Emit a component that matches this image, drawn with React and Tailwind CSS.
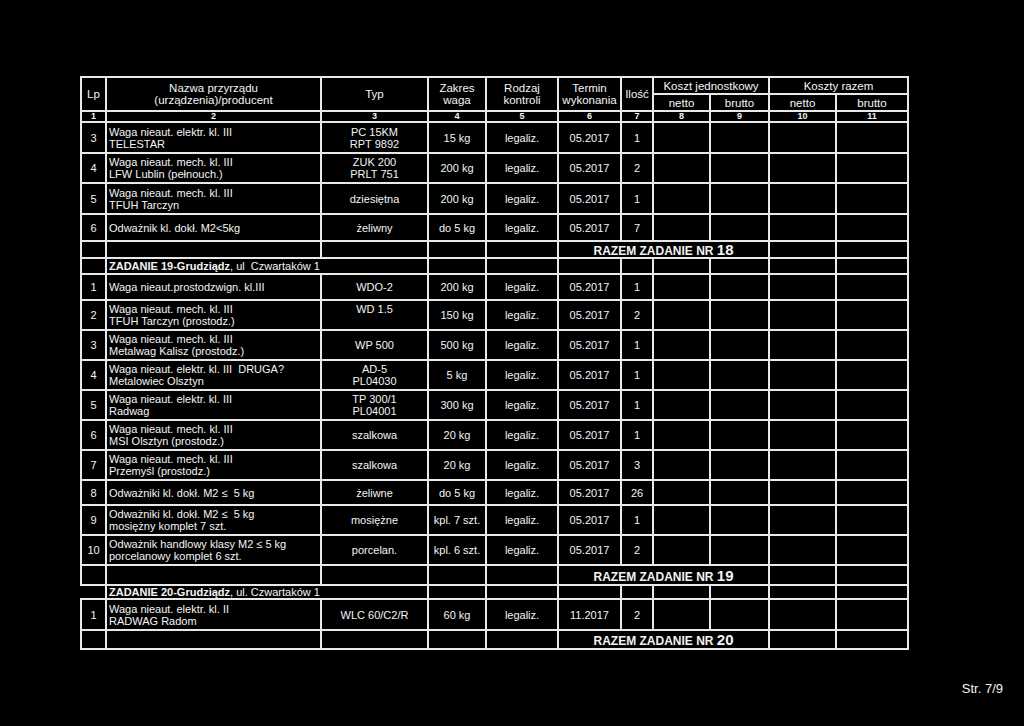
import React from 'react'

const td = 'border-2 border-[#e8e8e8] px-[2px] text-center align-middle'
const tdL = 'border-2 border-[#e8e8e8] pl-[2px] text-left align-middle'

const rows = [
  { lp: '3', name: ['Waga nieaut. elektr. kl. III', 'TELESTAR'], typ: ['PC 15KM', 'RPT 9892'], zakres: '15 kg', termin: '05.2017', il: '1', h: 'h-[31px]' },
  { lp: '4', name: ['Waga nieaut. mech. kl. III', 'LFW Lublin (pełnouch.)'], typ: ['ZUK 200', 'PRLT 751'], zakres: '200 kg', termin: '05.2017', il: '2', h: 'h-[30px]' },
  { lp: '5', name: ['Waga nieaut. mech. kl. III', 'TFUH Tarczyn'], typ: ['dziesiętna'], zakres: '200 kg', termin: '05.2017', il: '1', h: 'h-[31px]' },
  { lp: '6', name: ['Odważnik kl. dokł. M2<5kg'], typ: ['żeliwny'], zakres: 'do 5 kg', termin: '05.2017', il: '7', h: 'h-[27px]' },
  { razem: '18', h: 'h-[16px]' },
  { zadanie: '19', rest: ', ul  Czwartaków 1', h: 'h-[16px]', lpBorder: true },
  { lp: '1', name: ['Waga nieaut.prostodzwign. kl.III'], typ: ['WDO-2'], zakres: '200 kg', termin: '05.2017', il: '1', h: 'h-[26px]' },
  { lp: '2', name: ['Waga nieaut. mech. kl. III', 'TFUH Tarczyn (prostodz.)'], typ: ['WD 1.5', '\u00a0'], zakres: '150 kg', termin: '05.2017', il: '2', h: 'h-[30px]' },
  { lp: '3', name: ['Waga nieaut. mech. kl. III', 'Metalwag Kalisz (prostodz.)'], typ: ['WP 500'], zakres: '500 kg', termin: '05.2017', il: '1', h: 'h-[30px]' },
  { lp: '4', name: ['Waga nieaut. elektr. kl. III  DRUGA?', 'Metalowiec Olsztyn'], typ: ['AD-5', 'PL04030'], zakres: '5 kg', termin: '05.2017', il: '1', h: 'h-[30px]' },
  { lp: '5', name: ['Waga nieaut. elektr. kl. III', 'Radwag'], typ: ['TP 300/1', 'PL04001'], zakres: '300 kg', termin: '05.2017', il: '1', h: 'h-[30px]' },
  { lp: '6', name: ['Waga nieaut. mech. kl. III', 'MSI Olsztyn (prostodz.)'], typ: ['szalkowa'], zakres: '20 kg', termin: '05.2017', il: '1', h: 'h-[30px]' },
  { lp: '7', name: ['Waga nieaut. mech. kl. III', 'Przemyśl (prostodz.)'], typ: ['szalkowa'], zakres: '20 kg', termin: '05.2017', il: '3', h: 'h-[30px]' },
  { lp: '8', name: ['Odważniki kl. dokł. M2 ≤  5 kg'], typ: ['żeliwne'], zakres: 'do 5 kg', termin: '05.2017', il: '26', h: 'h-[25px]' },
  { lp: '9', name: ['Odważniki kl. dokł. M2 ≤  5 kg', 'mosiężny komplet 7 szt.'], typ: ['mosiężne'], zakres: 'kpl. 7 szt.', termin: '05.2017', il: '1', h: 'h-[30px]' },
  { lp: '10', name: ['Odważnik handlowy klasy M2 ≤ 5 kg', 'porcelanowy komplet 6 szt.'], typ: ['porcelan.'], zakres: 'kpl. 6 szt.', termin: '05.2017', il: '2', h: 'h-[30px]' },
  { razem: '19', h: 'h-[20px]' },
  { zadanie: '20', rest: ', ul. Czwartaków 1', h: 'h-[14px]', lpBorder: false },
  { lp: '1', name: ['Waga nieaut. elektr. kl. II', 'RADWAG Radom'], typ: ['WLC 60/C2/R'], zakres: '60 kg', termin: '11.2017', il: '2', h: 'h-[31px]' },
  { razem: '20', h: 'h-[19px]' },
]

const Empty = ({ n }) => Array.from({ length: n }).map((_, i) => <td key={i} className={td}></td>)

const Row = ({ r }) => {
  if (r.razem) {
    return (
      <tr className={r.h}>
        <Empty n={5} />
        <td colSpan={4} className={td + ' font-bold text-[12px] leading-none'}>
          RAZEM ZADANIE NR <span className="text-[15px]">{r.razem}</span>
        </td>
        <Empty n={2} />
      </tr>
    )
  }
  if (r.zadanie) {
    return (
      <tr className={r.h}>
        <td className={r.lpBorder ? td : 'border-y-2 border-[#e8e8e8]'}></td>
        <td colSpan={2} className={tdL + ' leading-none whitespace-pre'}>
          <span className="font-bold">ZADANIE {r.zadanie}-Grudziądz</span>{r.rest}
        </td>
        <Empty n={8} />
      </tr>
    )
  }
  return (
    <tr className={r.h}>
      <td className={td}>{r.lp}</td>
      <td className={tdL}>
        {r.name.map((l, i) => <div key={i} className="whitespace-pre">{l}</div>)}
      </td>
      <td className={td}>
        {r.typ.map((l, i) => <div key={i}>{l}</div>)}
      </td>
      <td className={td}>{r.zakres}</td>
      <td className={td}>legaliz.</td>
      <td className={td}>{r.termin}</td>
      <td className={td}>{r.il}</td>
      <Empty n={4} />
    </tr>
  )
}

export default function App() {
  return (
    <div className="w-[1024px] h-[726px] bg-black text-[#f4f4f4] font-['Liberation_Sans',Arial,sans-serif] flex flex-col">
      <div className="pt-[76px] pl-[80px]">
        <table className="table-fixed w-[827px] border-collapse text-[11px] leading-[12px]">
          <colgroup>
            <col className="w-[25px]" />
            <col className="w-[215px]" />
            <col className="w-[107px]" />
            <col className="w-[58px]" />
            <col className="w-[72px]" />
            <col className="w-[63px]" />
            <col className="w-[32px]" />
            <col className="w-[57px]" />
            <col className="w-[59px]" />
            <col className="w-[67px]" />
            <col className="w-[72px]" />
          </colgroup>
          <thead className="text-[11.5px]">
            <tr className="h-[17px]">
              <td rowSpan={2} className={td}>Lp</td>
              <td rowSpan={2} className={td}>Nazwa przyrządu<br />(urządzenia)/producent</td>
              <td rowSpan={2} className={td}>Typ</td>
              <td rowSpan={2} className={td}>Zakres<br />waga</td>
              <td rowSpan={2} className={td}>Rodzaj<br />kontroli</td>
              <td rowSpan={2} className={td + ' px-0'}>Termin<br />wykonania</td>
              <td rowSpan={2} className={td + ' px-0'}>Ilość</td>
              <td colSpan={2} className={td}>Koszt jednostkowy</td>
              <td colSpan={2} className={td}>Koszty razem</td>
            </tr>
            <tr className="h-[17px]">
              <td className={td}>netto</td>
              <td className={td}>brutto</td>
              <td className={td}>netto</td>
              <td className={td}>brutto</td>
            </tr>
            <tr className="h-[11px] text-[9px] leading-none font-bold">
              {['1', '2', '3', '4', '5', '6', '7', '8', '9', '10', '11'].map((n) => (
                <td key={n} className={td}>{n}</td>
              ))}
            </tr>
          </thead>
          <tbody>
            {rows.map((r, i) => <Row key={i} r={r} />)}
          </tbody>
        </table>
      </div>
      <div className="mt-auto pb-[28px] pr-[21px] text-right text-[13px]">Str. 7/9</div>
    </div>
  )
}
